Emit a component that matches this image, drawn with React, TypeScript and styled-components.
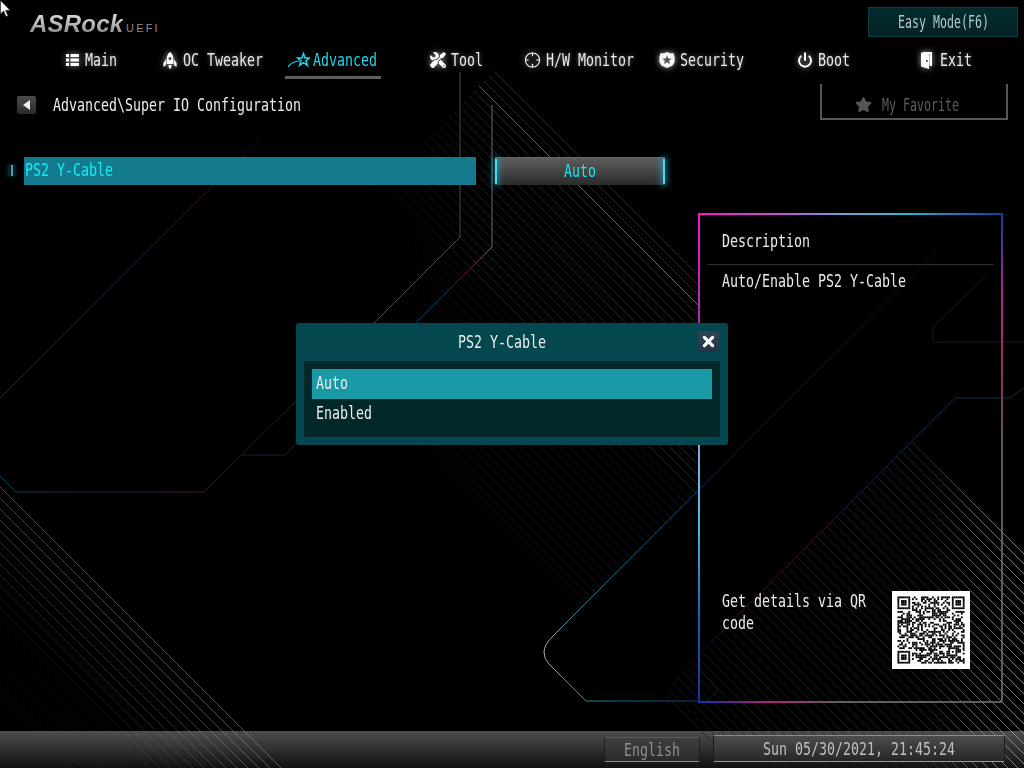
import React from "react";
import styled, { createGlobalStyle } from "styled-components";
import { FaTools, FaStar } from "react-icons/fa";
import { Crosshair, Power } from "lucide-react";

const Global = createGlobalStyle`
  html, body { margin: 0; padding: 0; background: #000; }
  #root { width: 1024px; height: 768px; }
`;

const Page = styled.div`
  position: relative;
  width: 1024px;
  height: 768px;
  overflow: hidden;
  background: #000;
  display: flex;
  flex-direction: column;
  font-family: "DejaVu Sans Mono", monospace;
  color: #ececec;
`;

const Backdrop = styled.svg`
  position: absolute;
  left: 0;
  top: 0;
  z-index: 1;
  pointer-events: none;
`;

const Content = styled.div`
  position: relative;
  z-index: 2;
  flex: 1;
  display: flex;
  flex-direction: column;
  min-height: 0;
`;

const Glyphs = styled.span<{ $n: number }>`
  display: inline-block;
  width: ${(p) => p.$n * 8}px;
  height: 18px;
  line-height: 17px;
  font-size: 18px;
  white-space: pre;
  transform: scaleX(0.738);
  transform-origin: left center;
  flex: none;
`;

const T: React.FC<{ children: string; className?: string }> = ({ children, className }) => (
  <Glyphs $n={children.length} className={className}>
    {children}
  </Glyphs>
);

const Header = styled.header`
  height: 44px;
  box-sizing: border-box;
  padding: 7px 6px 0 30px;
  display: flex;
  justify-content: space-between;
  align-items: flex-start;
`;

const Logo = styled.div`
  display: flex;
  align-items: baseline;
  gap: 3px;
  margin-top: 3px;
`;

const LogoMark = styled.span`
  font-family: "Liberation Sans", sans-serif;
  font-weight: 700;
  font-style: italic;
  font-size: 24px;
  line-height: 28px;
  letter-spacing: 0.2px;
  background: linear-gradient(180deg, #e6e6e6 0%, #bdbdbd 45%, #767676 100%);
  -webkit-background-clip: text;
  background-clip: text;
  color: transparent;
  width: 93px;
  white-space: nowrap;
`;

const LogoTag = styled.span`
  font-family: "Liberation Sans", sans-serif;
  font-size: 11px;
  letter-spacing: 2.2px;
  color: #8d8d8d;
  margin-bottom: 2px;
`;

const EasyButton = styled.div`
  width: 150px;
  height: 30px;
  box-sizing: border-box;
  border: 1px solid #0c3f42;
  background: linear-gradient(180deg, #022c2e 0%, #052226 100%);
  color: #b6c6c6;
  display: flex;
  align-items: center;
  justify-content: center;
`;

const SmallGlyphs = styled(T)`
  width: ${(p) => p.children.length * 7}px;
  transform: scaleX(0.646);
`;

const Nav = styled.nav`
  height: 35px;
  padding-left: 66px;
  display: grid;
  grid-template-columns: 97px 125px 142px 94px 135px 138px 123px 1fr;
`;

const NavItem = styled.div<{ $active?: boolean }>`
  position: relative;
  display: flex;
  align-items: center;
  height: 32px;
  color: ${(p) => (p.$active ? "#1ed7ee" : "#e9e9e9")};
  text-shadow: ${(p) => (p.$active ? "none" : "0 0 5px rgba(255,255,255,.45)")};
  ${(p) =>
    p.$active &&
    `&::after {
      content: "";
      position: absolute;
      left: -3px;
      bottom: -3px;
      width: 96px;
      height: 3px;
      background: #5e5e5e;
    }`}
`;

const NavIcon = styled.span<{ $w: number; $gap: number }>`
  display: flex;
  align-items: center;
  justify-content: center;
  width: ${(p) => p.$w}px;
  height: 20px;
  margin-right: ${(p) => p.$gap}px;
  filter: drop-shadow(0 0 3px rgba(255, 255, 255, 0.65));
`;

const ActiveIcon = styled(NavIcon)`
  filter: none;
`;

const Crumbs = styled.div`
  height: 36px;
  padding: 5px 16px 0 17px;
  display: flex;
  justify-content: space-between;
  align-items: flex-start;
`;

const Path = styled.div`
  display: flex;
  align-items: center;
  gap: 17px;
  margin-top: 12px;
`;

const BackButton = styled.div`
  width: 19px;
  height: 18px;
  border-radius: 2px;
  background: linear-gradient(180deg, #4a4a4a, #2c2c2c);
  display: flex;
  align-items: center;
  justify-content: center;
  &::before {
    content: "";
    border-style: solid;
    border-width: 5px 7px 5px 0;
    border-color: transparent #f0f0f0 transparent transparent;
  }
`;

const Favorite = styled.div`
  width: 188px;
  height: 36px;
  box-sizing: border-box;
  border: 2px solid #565656;
  border-top: none;
  display: flex;
  align-items: center;
  justify-content: flex-start;
  padding: 7px 0 0 33px;
  color: #5d5d5d;
  gap: 10px;
`;

const Main = styled.main`
  flex: 1;
  display: flex;
  min-height: 0;
`;

const Settings = styled.section`
  width: 698px;
  flex: none;
  box-sizing: border-box;
  padding: 37px 0 0 8px;
`;

const SettingRow = styled.div`
  display: flex;
  align-items: flex-start;
`;

const Handle = styled.div`
  width: 7px;
  height: 11px;
  margin: 8px 9px 0 0;
  background: #04252b;
  box-shadow: 0 0 3px 1px #04252b;
  display: flex;
  justify-content: center;
  &::before {
    content: "";
    width: 2px;
    height: 100%;
    background: #6f8f97;
  }
`;

const SettingLabel = styled.div`
  width: 452px;
  height: 28px;
  background: #147a8e;
  color: #12edf6;
  display: flex;
  align-items: center;
  padding: 0 0 2px 1px;
  box-sizing: border-box;
`;

const SettingValue = styled.div`
  position: relative;
  width: 170px;
  height: 28px;
  margin-left: 19px;
  box-sizing: border-box;
  border-top: 1px solid #666;
  padding-bottom: 2px;
  background: linear-gradient(180deg, #5d5d5d 0%, #2b2b2b 100%);
  color: #16e6f2;
  display: flex;
  align-items: center;
  justify-content: center;
  &::before,
  &::after {
    content: "";
    position: absolute;
    top: 1px;
    width: 2px;
    height: 25px;
    background: #48d9f5;
    box-shadow: 0 0 6px 2px rgba(30, 190, 230, 0.55);
  }
  &::before { left: 0; }
  &::after { right: 0; }
`;

const Panel = styled.aside`
  width: 305px;
  height: 490px;
  margin-top: 93px;
  box-sizing: border-box;
  padding: 2px;
  display: flex;
  flex-direction: column;
  background:
    linear-gradient(90deg, #ff12c8 0%, #c058d8 30%, #62a8e0 50%, #28b8d8 68%, #0a3f9c 100%) top / 100% 2px no-repeat,
    linear-gradient(180deg, #ff10d0 0%, #a030b0 22%, #86aee0 50%, #3cc0d8 64%, #1460b8 82%, #1a2ca8 100%) left / 2px 100% no-repeat,
    linear-gradient(180deg, #0a3f9c 0%, #cc1c88 18%, #883060 34%, #5c5c5c 48%, #5c5c5c 100%) right / 2px 100% no-repeat,
    linear-gradient(90deg, #1a2ca8 0%, #b02078 24%, #606060 46%, #5c5c5c 100%) bottom / 100% 2px no-repeat;
`;

const PanelHead = styled.div`
  height: 50px;
  margin: 0 7px;
  box-sizing: border-box;
  border-bottom: 1px solid #2e2e2e;
  padding: 17px 0 0 15px;
`;

const PanelBody = styled.div`
  padding: 7px 0 0 22px;
`;

const PanelFoot = styled.div`
  margin-top: auto;
  padding: 0 31px 32px 22px;
  display: flex;
  justify-content: space-between;
  align-items: flex-start;
`;

const QrNote = styled.div`
  display: flex;
  flex-direction: column;
  gap: 4px;
  padding-top: 1px;
`;

const Qr = styled.svg`
  display: block;
  background: #fff;
`;

const Modal = styled.div`
  position: absolute;
  left: 296px;
  top: 323px;
  width: 432px;
  height: 122px;
  box-sizing: border-box;
  padding: 0 8px 8px;
  border-radius: 3px;
  background: #05474e;
  display: flex;
  flex-direction: column;
  z-index: 3;
`;

const ModalTitle = styled.div`
  height: 38px;
  padding-right: 20px;
  display: flex;
  align-items: center;
  justify-content: center;
`;

const CloseButton = styled.div`
  position: absolute;
  right: 9px;
  top: 8px;
  width: 21px;
  height: 21px;
  border-radius: 3px;
  background: linear-gradient(180deg, #2e4658, #243444);
  display: flex;
  align-items: center;
  justify-content: center;
`;

const OptionList = styled.div`
  flex: 1;
  background: #032829;
  padding: 8px;
`;

const Option = styled.div<{ $selected?: boolean }>`
  height: 30px;
  box-sizing: border-box;
  display: flex;
  align-items: center;
  padding: 0 0 2px 4px;
  background: ${(p) => (p.$selected ? "#1a9aa6" : "transparent")};
`;

const Footer = styled.footer`
  height: 37px;
  box-sizing: border-box;
  background: linear-gradient(180deg, #4e4e4e 0%, #2c2c2c 55%, #101010 100%);
`;

const FooterBar = styled.div`
  position: relative;
  z-index: 2;
  height: 100%;
  display: flex;
  justify-content: flex-end;
  align-items: flex-start;
  padding-right: 19px;
  gap: 13px;
`;

const LangButton = styled.div`
  width: 96px;
  height: 25px;
  margin-top: 6px;
  box-sizing: border-box;
  border: 1px solid #1f1f1f;
  border-top-color: #5a5a5a;
  border-bottom-color: #8a8a8a;
  border-radius: 2px;
  background: linear-gradient(180deg, #3f3f3f, #2a2a2a);
  color: #8e8e8e;
  display: flex;
  align-items: center;
  justify-content: center;
`;

const ClockButton = styled.div`
  width: 292px;
  height: 27px;
  margin-top: 4px;
  box-sizing: border-box;
  border: 1px solid #1c1c1c;
  border-top-color: #8c8c8c;
  border-bottom-color: #9a9a9a;
  border-radius: 2px;
  background: linear-gradient(180deg, #4d4d4d, #262626);
  color: #c0c0c0;
  display: flex;
  align-items: center;
  justify-content: center;
`;

const Cursor = styled.svg`
  position: absolute;
  left: 0;
  top: 0;
  z-index: 5;
`;

type Stop = [number, string];
const Grad: React.FC<{ id: string; x1: number; x2: number; stops: Stop[] }> = ({ id, x1, x2, stops }) => (
  <linearGradient id={id} gradientUnits="userSpaceOnUse" x1={x1} y1={0} x2={x2} y2={0}>
    {stops.map(([o, c], i) => (
      <stop key={i} offset={o} stopColor={c} />
    ))}
  </linearGradient>
);

const hatch = (cMin: number, cMax: number, step: number) => {
  const out: number[] = [];
  for (let c = cMin; c <= cMax; c += step) out.push(c);
  return out;
};

const centerOpacity = (c: number) => {
  if (c === 393) return 0.8;
  if (c > 370) return 0.3;
  if (c > 200) return 0.26;
  if (c > 150) return 0.16;
  return 0.13;
};

const Art: React.FC = () => (
  <Backdrop width={1024} height={768} viewBox="0 0 1024 768">
    <defs>
      <Grad id="a" x1={0} x2={460} stops={[[0, "#0d4252"], [0.2, "#0e2c40"], [0.42, "#4a0f32"], [0.58, "#1a1830"], [0.82, "#4a4a4a"], [1, "#484848"]]} />
      <Grad id="b" x1={400} x2={492} stops={[[0, "#0c3a52"], [0.45, "#0c4058"], [0.72, "#5a1525"], [1, "#6a6a6a"]]} />
      <Grad id="c" x1={0} x2={259} stops={[[0, "#0c3444"], [0.4, "#10253a"], [0.8, "#3c0e30"], [1, "#200a20"]]} />
      <Grad id="d" x1={544} x2={938} stops={[[0, "#b0b0b0"], [0.06, "#4a8a98"], [0.2, "#116a88"], [0.39, "#123a84"], [0.46, "#1a1a3c"], [0.66, "#2a0e26"], [1, "#140a14"]]} />
      <Grad id="e" x1={700} x2={1024} stops={[[0, "#0e0e2a"], [0.15, "#2a1020"], [0.38, "#3a1030"], [0.56, "#142050"], [0.79, "#0e3040"], [1, "#123038"]]} />
      <Grad id="lh" x1={0} x2={300} stops={[[0, "#7c7c7c"], [1, "#9a9a9a"]]} />
      <Grad id="ch" x1={400} x2={700} stops={[[0, "#222"], [0.3, "#777"], [1, "#888"]]} />
      <Grad id="rh" x1={700} x2={1024} stops={[[0, "#1c1c1c"], [0.7, "#2c2c2c"], [0.86, "#8a8a8a"], [1, "#a8a8a8"]]} />
      <clipPath id="clipC">
        <polygon points="495,70 698,273 698,492 581,608 269,296" />
      </clipPath>
      <clipPath id="clipR">
        <polygon points="913,440 1024,550 1024,768 760,768 648,727 676,677" />
      </clipPath>
    </defs>
    <g fill="none" strokeWidth={1}>
      <polyline points="460,72 460,237 296,401 204,492 16,492 0,476" stroke="url(#a)" />
      <polyline points="241,455 285,455 296,444" stroke="url(#a)" />
      <polyline points="492,105 492,247 400,339" stroke="url(#b)" />
      <line x1={259} y1={140} x2={0} y2={398} stroke="url(#c)" />
      <path d="M938 250 L553 636 Q544 645 544 652 Q544 659 549 664 L586 701 L698 701" stroke="url(#d)" />
      <polyline points="1024,388 1010,398 955,398 700,653" stroke="url(#e)" />
      <polyline points="987,275 933,327 933,342 1024,342" stroke="#0a1f1e" />
      <polyline points="700,670 718,690 702,705" stroke="#14143a" />

      {hatch(0, 210, 11).map((k) => (
        <line
          key={k}
          x1={0}
          y1={487 + k}
          x2={330}
          y2={817 + k}
          stroke="url(#lh)"
          strokeOpacity={Math.max(0.06, 0.55 - k * 0.0035)}
        />
      ))}
      <g clipPath="url(#clipC)">
        {hatch(-27, 423, 10).map((c) => (
          <line
            key={c}
            x1={c + 40}
            y1={40}
            x2={c + 720}
            y2={720}
            stroke="url(#ch)"
            strokeOpacity={centerOpacity(c)}
          />
        ))}
      </g>
      <g clipPath="url(#clipR)">
        {hatch(-30, 475, 10).map((c) => (
          <line
            key={c}
            x1={c + 400}
            y1={400}
            x2={c + 800}
            y2={800}
            stroke="url(#rh)"
            strokeOpacity={0.75}
          />
        ))}
      </g>
    </g>
  </Backdrop>
);

const qrCells = (): [number, number][] => {
  const n = 37;
  const far = n - 7;
  const cells: [number, number][] = [];
  let s = 20210530;
  const rnd = () => {
    s = (s * 1664525 + 1013904223) >>> 0;
    return (s >>> 16) / 65536;
  };
  const inFinder = (x: number, y: number, a: number, b: number) => x >= a - 1 && x <= a + 7 && y >= b - 1 && y <= b + 7;
  for (let y = 0; y < n; y++) {
    for (let x = 0; x < n; x++) {
      const r = rnd();
      const fa = inFinder(x, y, 0, 0);
      const fb = inFinder(x, y, far, 0);
      const fc = inFinder(x, y, 0, far);
      if (fa || fb || fc) {
        const a = fb ? far : 0;
        const b = fc ? far : 0;
        const dx = x - a;
        const dy = y - b;
        if (dx < 0 || dy < 0 || dx > 6 || dy > 6) continue;
        const ring = dx === 0 || dx === 6 || dy === 0 || dy === 6;
        const core = dx >= 2 && dx <= 4 && dy >= 2 && dy <= 4;
        if (ring || core) cells.push([x, y]);
      } else if (x >= 28 && x <= 32 && y >= 28 && y <= 32) {
        const ring = x === 28 || x === 32 || y === 28 || y === 32;
        if (ring || (x === 30 && y === 30)) cells.push([x, y]);
      } else if (r < 0.52) {
        cells.push([x, y]);
      }
    }
  }
  return cells;
};

const QrCode: React.FC = () => (
  <Qr width={78} height={78} viewBox="-3 -3 43 43">
    {qrCells().map(([x, y]) => (
      <rect key={`${x}-${y}`} x={x} y={y} width={1.02} height={1.02} fill="#000" />
    ))}
  </Qr>
);

const ListIcon = () => (
  <svg width={13} height={12} viewBox="0 0 13 12" fill="#fff">
    <rect x={0} y={0} width={3} height={3} />
    <rect x={0} y={4.5} width={3} height={3} />
    <rect x={0} y={9} width={3} height={3} />
    <rect x={4.5} y={0} width={8.5} height={3} />
    <rect x={4.5} y={4.5} width={8.5} height={3} />
    <rect x={4.5} y={9} width={8.5} height={3} />
  </svg>
);

const RocketIcon = () => (
  <svg width={14} height={17} viewBox="0 0 14 17" fill="#fff">
    <path d="M7 0 C9.5 2 10.4 4.6 10.4 7.5 L10.4 12 L3.6 12 L3.6 7.5 C3.6 4.6 4.5 2 7 0 Z" />
    <path d="M3 7.5 L0.4 11 L0.4 15 L3 13 Z M11 7.5 L13.6 11 L13.6 15 L11 13 Z" />
    <path d="M5.4 13 L8.6 13 L8 16.6 L6 16.6 Z" />
    <circle cx={7} cy={6.5} r={1.5} fill="#444" />
  </svg>
);

const StarSwoosh = () => (
  <svg width={22} height={17} viewBox="0 0 22 17" fill="none" stroke="#1ed7ee" strokeWidth={1.5}>
    <path d="M15.5 1.5 L17 6 L21.5 6 L18 8.8 L19.4 13.4 L15.5 10.6 L11.6 13.4 L13 8.8 L9.6 6 L14 6 Z" />
    <path d="M0 15 C3 11 6 9.2 11 9" strokeWidth={1.1} />
  </svg>
);

const ShieldIcon = () => (
  <svg width={16} height={16} viewBox="0 0 16 16">
    <path d="M8 0 L11 1.2 L14.6 1.2 L15.6 5 L15.6 10 L13.6 13.6 L8 16 L2.4 13.6 L0.4 10 L0.4 5 L1.4 1.2 L5 1.2 Z" fill="#f4f4f4" />
    <path d="M8 3.4 L9.3 6.4 L12.6 6.7 L10.1 8.8 L10.9 12 L8 10.3 L5.1 12 L5.9 8.8 L3.4 6.7 L6.7 6.4 Z" fill="#555" />
  </svg>
);

const DoorIcon = () => (
  <svg width={13} height={17} viewBox="0 0 13 17" fill="#fff">
    <path d="M2 0 L12 0 L12 14 L9.5 14 L9.5 2 L4.5 2 Z" />
    <path d="M1 0.6 L9 2.4 L9 17 L1 14.6 Z" />
    <rect x={6} y={8} width={1.5} height={2} fill="#333" />
  </svg>
);

const CloseIcon = () => (
  <svg width={13} height={13} viewBox="0 0 13 13" stroke="#fff" strokeWidth={3.2} strokeLinecap="round">
    <line x1={2.4} y1={2.4} x2={10.6} y2={10.6} />
    <line x1={10.6} y1={2.4} x2={2.4} y2={10.6} />
  </svg>
);

export default function App() {
  return (
    <Page>
      <Global />
      <Art />
      <Content>
        <Header>
          <Logo>
            <LogoMark>ASRock</LogoMark>
            <LogoTag>UEFI</LogoTag>
          </Logo>
          <EasyButton>
            <SmallGlyphs>Easy Mode(F6)</SmallGlyphs>
          </EasyButton>
        </Header>
        <Nav>
          <NavItem>
            <NavIcon $w={13} $gap={6}><ListIcon /></NavIcon>
            <T>Main</T>
          </NavItem>
          <NavItem>
            <NavIcon $w={14} $gap={6}><RocketIcon /></NavIcon>
            <T>OC Tweaker</T>
          </NavItem>
          <NavItem $active>
            <ActiveIcon $w={22} $gap={3}><StarSwoosh /></ActiveIcon>
            <T>Advanced</T>
          </NavItem>
          <NavItem>
            <NavIcon $w={16} $gap={5}><FaTools size={16} color="#fff" style={{ transform: "scaleX(-1)" }} /></NavIcon>
            <T>Tool</T>
          </NavItem>
          <NavItem>
            <NavIcon $w={17} $gap={5}><Crosshair size={20} color="#fff" strokeWidth={1.5} /></NavIcon>
            <T>H/W Monitor</T>
          </NavItem>
          <NavItem>
            <NavIcon $w={16} $gap={5}><ShieldIcon /></NavIcon>
            <T>Security</T>
          </NavItem>
          <NavItem>
            <NavIcon $w={16} $gap={5}><Power size={20} color="#fff" strokeWidth={3} /></NavIcon>
            <T>Boot</T>
          </NavItem>
          <NavItem>
            <NavIcon $w={13} $gap={7}><DoorIcon /></NavIcon>
            <T>Exit</T>
          </NavItem>
        </Nav>
        <Crumbs>
          <Path>
            <BackButton />
            <T>{"Advanced\\Super IO Configuration"}</T>
          </Path>
          <Favorite>
            <FaStar size={17} color="#555" />
            <SmallGlyphs>My Favorite</SmallGlyphs>
          </Favorite>
        </Crumbs>
        <Main>
          <Settings>
            <SettingRow>
              <Handle />
              <SettingLabel>
                <T>PS2 Y-Cable</T>
              </SettingLabel>
              <SettingValue>
                <T>Auto</T>
              </SettingValue>
            </SettingRow>
          </Settings>
          <Panel>
            <PanelHead>
              <T>Description</T>
            </PanelHead>
            <PanelBody>
              <T>Auto/Enable PS2 Y-Cable</T>
            </PanelBody>
            <PanelFoot>
              <QrNote>
                <T>Get details via QR</T>
                <T>code</T>
              </QrNote>
              <QrCode />
            </PanelFoot>
          </Panel>
        </Main>
      </Content>
      <Footer>
        <FooterBar>
          <LangButton>
            <T>English</T>
          </LangButton>
          <ClockButton>
            <T>Sun 05/30/2021, 21:45:24</T>
          </ClockButton>
        </FooterBar>
      </Footer>
      <Modal>
        <ModalTitle>
          <T>PS2 Y-Cable</T>
        </ModalTitle>
        <CloseButton>
          <CloseIcon />
        </CloseButton>
        <OptionList>
          <Option $selected>
            <T>Auto</T>
          </Option>
          <Option>
            <T>Enabled</T>
          </Option>
        </OptionList>
      </Modal>
      <Cursor width={11} height={18} viewBox="0 0 11 18">
        <path d="M0.5 0.5 L0.5 14 L3.6 11 L6 16.6 L8 15.8 L5.6 10.4 L10 10.2 Z" fill="#fff" stroke="#222" strokeWidth={0.6} />
      </Cursor>
    </Page>
  );
}
